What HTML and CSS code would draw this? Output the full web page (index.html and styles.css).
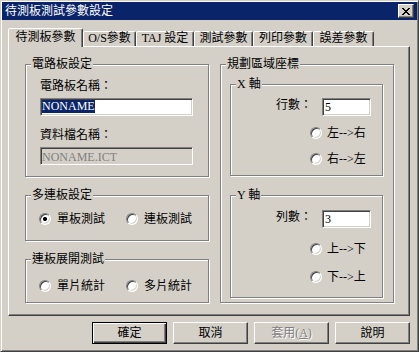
FILE: index.html
```html
<!DOCTYPE html>
<html lang="zh-Hant">
<head>
<meta charset="utf-8">
<title>待測板測試參數設定</title>
<link rel="stylesheet" href="styles.css">
</head>
<body>
<div class="window">
  <div class="titlebar">
    <span class="title">待測板測試參數設定</span>
    <span class="close"><svg width="8" height="7" viewBox="0 0 8 7" shape-rendering="crispEdges"><path d="M0 0h2v1h-2zM6 0h2v1h-2zM1 1h2v1h-2zM5 1h2v1h-2zM2 2h4v1h-4zM3 3h2v1h-2zM2 4h4v1h-4zM1 5h2v1h-2zM5 5h2v1h-2zM0 6h2v1h-2zM6 6h2v1h-2z" fill="#000"/></svg></span>
  </div>
  <div class="dlg">
    <div class="tabs">
      <div class="tab active t1">待測板參數</div>
      <div class="tab t2">O/S參數</div>
      <div class="tab t3">TAJ 設定</div>
      <div class="tab t4">測試參數</div>
      <div class="tab t5">列印參數</div>
      <div class="tab t6">誤差參數</div>
    </div>
    <div class="panel">
      <div class="col">
        <div class="group g-board">
          <div class="gtitle">電路板設定</div>
          <div class="label lb1">電路板名稱：</div>
          <div class="input wide"><span class="sel">NONAME</span></div>
          <div class="label lb2">資料檔名稱：</div>
          <div class="input wide disabled">NONAME.ICT</div>
        </div>
        <div class="group g-multi">
          <div class="gtitle">多連板設定</div>
          <div class="radios">
            <div class="radio first"><span class="rb on"></span><span>單板測試</span></div>
            <div class="radio"><span class="rb"></span><span>連板測試</span></div>
          </div>
        </div>
        <div class="group g-expand">
          <div class="gtitle">連板展開測試</div>
          <div class="radios">
            <div class="radio first"><span class="rb"></span><span>單片統計</span></div>
            <div class="radio"><span class="rb"></span><span>多片統計</span></div>
          </div>
        </div>
      </div>
      <div class="group g-area">
        <div class="gtitle">規劃區域座標</div>
        <div class="group sub g-x">
          <div class="gtitle">X 軸</div>
          <div class="field"><span class="flabel">行數：</span><span class="input small">5</span></div>
          <div class="radio r1"><span class="rb"></span><span>左--&gt;右</span></div>
          <div class="radio r2"><span class="rb"></span><span>右--&gt;左</span></div>
        </div>
        <div class="group sub g-y">
          <div class="gtitle">Y 軸</div>
          <div class="field"><span class="flabel">列數：</span><span class="input small">3</span></div>
          <div class="radio r1"><span class="rb"></span><span>上--&gt;下</span></div>
          <div class="radio r2"><span class="rb"></span><span>下--&gt;上</span></div>
        </div>
      </div>
    </div>
    <div class="buttons">
      <div class="btn default">確定</div>
      <div class="btn">取消</div>
      <div class="btn disabled">套用(<u>A</u>)</div>
      <div class="btn">說明</div>
    </div>
  </div>
</div>
</body>
</html>
```
FILE: styles.css
```css
* { box-sizing: border-box; }
html, body { margin: 0; padding: 0; }
body {
  background: #d4d0c8;
  font: 12px/14px "Liberation Serif", "Noto Sans CJK TC", serif;
  color: #000;
}
.window {
  width: 419px;
  height: 352px;
  border: 1px solid;
  border-color: #d4d0c8 #404040 #404040 #d4d0c8;
  box-shadow: inset 1px 1px #fff, inset -1px -1px #808080;
  padding: 1px 1px 2px 1px;
  background: #d4d0c8;
  display: flex;
  flex-direction: column;
}
.titlebar {
  height: 18px;
  background: #0a246a;
  color: #fff;
  display: flex;
  align-items: center;
  justify-content: space-between;
  padding: 0 3px 0 3px;
}
.title { line-height: 14px; }
.close {
  width: 16px;
  height: 14px;
  background: #d4d0c8;
  border: 1px solid;
  border-color: #fff #404040 #404040 #fff;
  box-shadow: inset -1px -1px #808080;
  display: flex;
  align-items: center;
  justify-content: center;
}
.close svg { display: block; }
.dlg {
  flex: 1;
  padding: 8px 7px 0 6px;
}
.tabs {
  display: flex;
  align-items: flex-end;
  height: 18px;
  position: relative;
  z-index: 1;
}
.tab {
  height: 15px;
  background: #d4d0c8;
  border: 1px solid;
  border-bottom: none;
  border-color: #fff #404040 transparent #fff;
  box-shadow: inset -1px 0 #808080;
  border-radius: 2px 2px 0 0;
  text-align: center;
  line-height: 13px;
  white-space: nowrap;
}
.tab.active {
  height: 19px;
  margin-bottom: -1px;
  padding-top: 1px;
  line-height: 14px;
}
.t1 { width: 75px; }
.t2 { width: 53px; }
.t3 { width: 58px; }
.t4 { width: 59px; }
.t5 { width: 60px; }
.t6 { width: 61px; }
.panel {
  height: 270px;
  border: 1px solid;
  border-color: #fff #404040 #404040 #fff;
  box-shadow: inset -1px -1px #808080;
  padding: 17px 0 0 16px;
  display: flex;
  align-items: flex-start;
  gap: 11px;
}
.col {
  width: 184px;
  display: flex;
  flex-direction: column;
  gap: 18px;
}
.group {
  border: 1px solid #808080;
  box-shadow: inset 1px 1px #fff, 1px 1px #fff;
  display: flex;
  flex-direction: column;
  align-items: flex-start;
}
.gtitle {
  margin: -8px 0 0 5px;
  padding: 0 1px;
  background: #d4d0c8;
  line-height: 14px;
  white-space: nowrap;
}
.g-board { height: 113px; }
.label { margin-left: 14px; white-space: nowrap; }
.lb1 { margin-top: 8px; }
.lb2 { margin-top: 12px; }
.input {
  height: 18px;
  background: #fff;
  border: 1px solid;
  border-color: #808080 #fff #fff #808080;
  box-shadow: inset 1px 1px #404040, inset -1px -1px #d4d0c8;
  padding: 1px 1px 0 1px;
  line-height: 14px;
  white-space: nowrap;
  overflow: hidden;
}
.input.wide { width: 153px; margin: 5px 0 0 14px; }
.input.disabled { background: #d4d0c8; color: #808080; padding-top: 2px; }
.sel {
  display: inline-block;
  background: #0a246a;
  color: #fff;
  line-height: 13px;
  vertical-align: top;
  margin-top: 0;
}
.g-multi { height: 46px; }
.g-expand { height: 44px; }
.radios { display: flex; margin-left: 13px; }
.g-multi .radios { margin-top: 10px; }
.g-expand .radios { margin-top: 13px; }
.radio {
  display: flex;
  align-items: center;
  gap: 6px;
  line-height: 14px;
  white-space: nowrap;
}
.radio.first { width: 87px; }
.rb {
  width: 12px;
  height: 12px;
  flex: none;
  border-radius: 50%;
  background: #fff;
  border: 1px solid;
  border-color: #808080 #fff #fff #808080;
  box-shadow: inset 1px 1px #404040, inset -1px -1px #d4d0c8;
}
.rb.on { background: radial-gradient(circle, #000 1.8px, #fff 2.3px); }
.g-area { width: 174px; height: 239px; }
.sub { width: 153px; margin-left: 9px; }
.g-x { height: 92px; margin-top: 13px; }
.g-y { height: 103px; margin-top: 19px; }
.field { display: flex; align-items: flex-start; margin-left: 45px; }
.flabel { width: 36px; line-height: 14px; white-space: nowrap; }
.input.small { width: 49px; margin-left: 10px; padding-left: 2px; }
.g-x .field { margin-top: 7px; }
.g-y .field { margin-top: 8px; }
.sub .radio { margin-left: 79px; gap: 5px; }
.g-x .r1 { margin-top: 10px; }
.g-x .r2 { margin-top: 12px; }
.g-y .r1 { margin-top: 14px; }
.g-y .r2 { margin-top: 14px; }
.buttons {
  display: flex;
  justify-content: flex-end;
  gap: 6px;
  margin-top: 6px;
}
.btn {
  width: 75px;
  height: 22px;
  background: #d4d0c8;
  border: 1px solid;
  border-color: #fff #404040 #404040 #fff;
  box-shadow: inset -1px -1px #808080;
  display: flex;
  align-items: center;
  justify-content: center;
  line-height: 14px;
}
.btn.default {
  border-color: #000;
  box-shadow: inset 1px 1px #fff, inset -1px -1px #404040, inset -2px -2px #808080;
}
.btn.disabled { color: #808080; text-shadow: 1px 1px 0 #fff; }
.btn u { text-decoration: underline; }
```
